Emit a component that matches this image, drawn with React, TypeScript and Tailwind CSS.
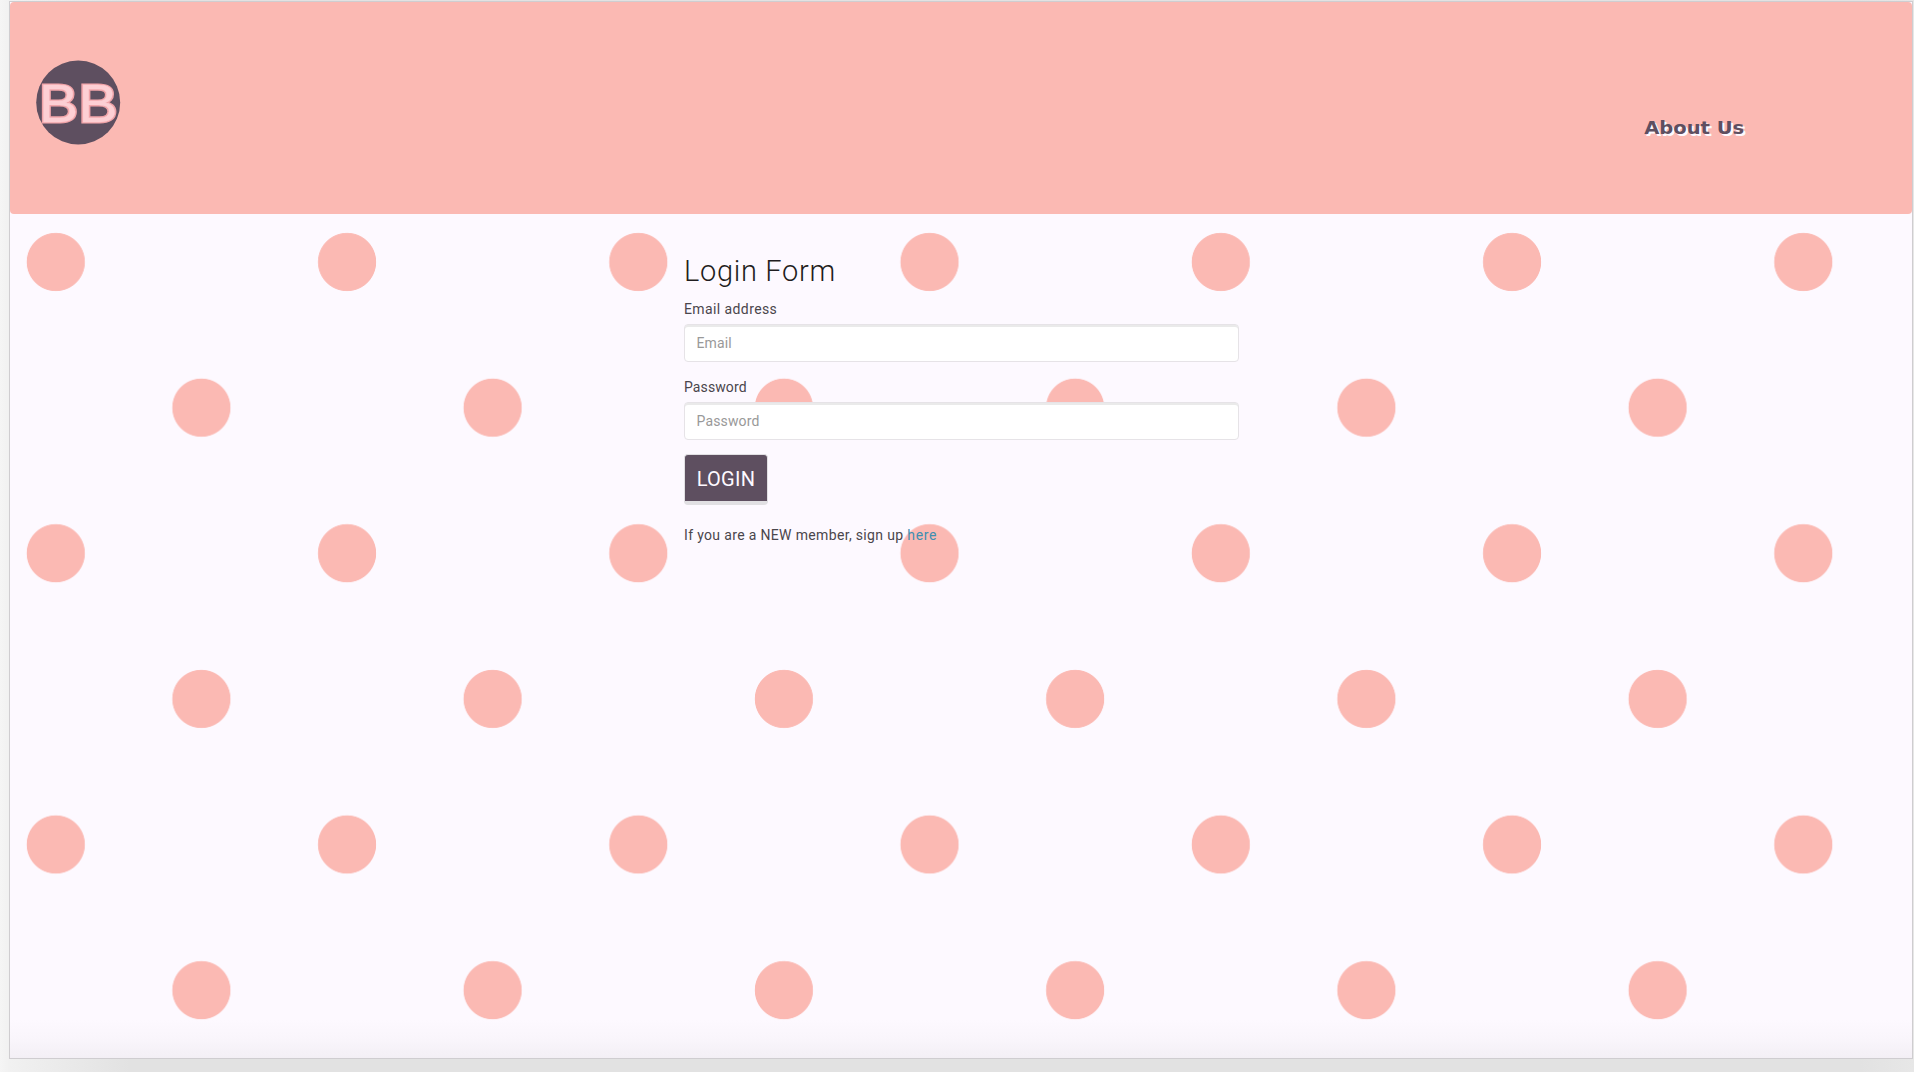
import React from "react";

function Logo() {
  return (
    <svg width="84" height="84" viewBox="0 0 84 84" className="block overflow-visible">
      <circle cx="42.2" cy="42.5" r="42" fill="#5e4f60" />
      <text
        x="2.7"
        y="61.9"
        fontFamily="Liberation Sans"
        fontSize="54.5"
        textLength="79"
        lengthAdjust="spacingAndGlyphs"
        fill="#fdcfd4"
        stroke="#f0a3a8"
        strokeWidth="3.2"
      >
        BB
      </text>
      <text
        x="2.7"
        y="61.9"
        fontFamily="Liberation Sans"
        fontSize="54.5"
        textLength="79"
        lengthAdjust="spacingAndGlyphs"
        fill="#fdcfd4"
        stroke="#fdcfd4"
        strokeWidth="0.3"
      >
        BB
      </text>
    </svg>
  );
}

function Field({ id, label, type, className }: { id: string; label: string; type: string; className: string }) {
  return (
    <div className="mb-[14px] h-[64px]">
      <label htmlFor={id} className={`block h-[26px] w-fit text-[14px] leading-[23px] text-[#4a464c] ${className}`}>
        {label}
      </label>
      <input
        id={id}
        type={type}
        placeholder={id === "email" ? "Email" : "Password"}
        className="block h-[38px] w-full rounded border border-[#e6e3e7] bg-white px-[11.5px] text-[14px] tracking-[0.15px] text-[#333] shadow-[inset_0_2px_0_#eaeaea] outline-none placeholder:text-[#999]"
      />
    </div>
  );
}

export default function App() {
  return (
    <div className="h-[1072px] w-[1914px] overflow-hidden bg-[linear-gradient(90deg,#f5f5f5_0,#f1f1f1_9px,#ededed_40px,#e2e2e2_130px,#e2e2e2_1860px,#e7e7e7_1914px)] pl-[9px] pt-px font-['Roboto',sans-serif]">
      <div className="flex h-[1058px] w-[1904px] flex-col border border-[#cfcdd0] bg-[#fdf9ff] bg-[image:linear-gradient(to_top,#f3eff5_0,#f9f5fb_17px,transparent_38px),radial-gradient(circle_at_145.6px_145.6px,#fbb9b3_28.7px,transparent_29.5px),radial-gradient(circle_at_145.6px_145.6px,#fbb9b3_28.7px,transparent_29.5px)] [background-position:0_0,-99.8px_114.4px,45.8px_260.1px] [background-size:100%_100%,291.25px_291.25px,291.25px_291.25px]">
        <header className="flex h-[212px] shrink-0 items-start justify-between rounded bg-[#fbb9b3] pl-[26px] pr-[168px] pt-[58px]">
          <Logo />
          <a
            href="#"
            className="mt-[56px] origin-right scale-x-[1.085] whitespace-nowrap font-['DejaVu_Sans',sans-serif] text-[18px] font-bold leading-6 text-[#5e4f60] [text-shadow:2px_2px_0_#fdf9ff]"
          >
            About Us
          </a>
        </header>
        <main className="ml-[674px] w-[555px] pt-[37px]">
          <h1 className="h-[47px] w-fit text-[29px] font-light leading-[40px] tracking-[0.7px] text-[#1f1d20]">Login Form</h1>
          <Field id="email" label="Email address" type="email" className="tracking-[0.4px]" />
          <Field id="password" label="Password" type="password" className="tracking-[0.1px]" />
          <button className="flex h-[51px] w-[84px] items-center justify-center rounded border border-b-4 border-[#e1e0e3] bg-[#5e4f60] pt-px text-[20px] tracking-[0.3px] text-[#fdf9ff]">
            LOGIN
          </button>
          <p className="mt-[18px] w-fit whitespace-nowrap text-[14px] leading-[24px] tracking-[0.34px] text-[#4a464c]">
            If you are a NEW member, sign up <a href="#" className="tracking-[0.7px] text-[#3f8fb1]">here</a>
          </p>
        </main>
      </div>
    </div>
  );
}
